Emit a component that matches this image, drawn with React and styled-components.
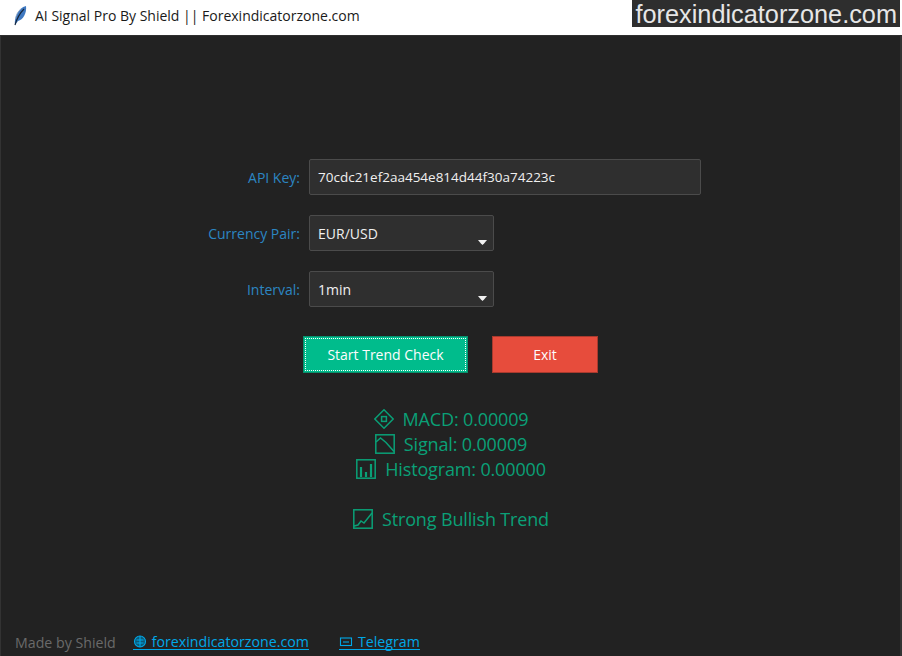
import React from 'react'
import styled, { createGlobalStyle } from 'styled-components'

const Global = createGlobalStyle`
html, body { margin: 0; padding: 0; background: #222222; }
body { font-family: "Open Sans", "Noto Sans", sans-serif; overflow: hidden; }
`
const Page = styled.div`
width: 902px;
height: 656px;
position: relative;
display: flex;
flex-direction: column;
overflow: hidden;
`
const TitleBar = styled.div`
height: 35px;
background: #ffffff;
display: flex;
align-items: center;
padding-left: 14px;
gap: 8px;
border-bottom: 1px solid #2f2f2f;
flex-shrink: 0;
`
const TitleText = styled.span`
font-size: 14px;
color: #1a1a1a;
padding-bottom: 4px;
`
const Feather = styled.svg`
width: 13px;
height: 21px;
margin-bottom: 4px;
`
const Watermark = styled.div`
position: absolute;
top: 0;
right: 2px;
width: 268px;
height: 27px;
background: #2e2e2e;
color: #e6e6e6;
font-family: "Liberation Sans", Arial, sans-serif;
font-size: 25.3px;
line-height: 29px;
text-align: right;
padding-right: 3px;
box-sizing: border-box;
white-space: nowrap;
overflow: hidden;
`
const Body = styled.div`
flex: 1;
background: #222222;
border-left: 1px solid #333333;
border-right: 2px solid #333333;
display: flex;
flex-direction: column;
align-items: flex-start;
padding-top: 123px;
`
const Form = styled.div`
display: grid;
grid-template-columns: 299px auto;
column-gap: 9px;
row-gap: 20px;
align-items: center;
`
const Label = styled.label`
font-size: 14px;
color: #2c86c2;
text-align: right;
`
const Field = styled.div`
width: ${props => props.w}px;
height: 36px;
box-sizing: border-box;
background: #2f2f2f;
border: 1px solid #4b4b4b;
border-radius: 2px;
color: #f0f0f0;
font-size: ${props => props.size}px;
display: flex;
align-items: center;
padding-left: 8px;
position: relative;
`
const Arrow = styled.span`
position: absolute;
right: 6px;
bottom: 5px;
width: 9px;
height: 5px;
background: #f0f0f0;
clip-path: polygon(0 0, 100% 0, 70% 65%, 50% 100%, 30% 65%);
`
const Buttons = styled.div`
display: flex;
margin: 29px 0 0 302px;
gap: 24px;
`
const Button = styled.div`
width: ${props => props.w}px;
height: 37px;
box-sizing: border-box;
background: ${props => props.bg};
border: 1px solid ${props => props.edge};
color: #fdfdfd;
font-size: 14px;
display: flex;
align-items: center;
justify-content: center;
position: relative;
`
const FocusRing = styled.span`
position: absolute;
inset: 1px;
border: 1px dotted #ffffff;
`
const Status = styled.div`
width: 100%;
box-sizing: border-box;
margin-top: 33px;
padding-left: 1px;
display: flex;
flex-direction: column;
align-items: center;
color: #0aa077;
font-size: 18px;
letter-spacing: -0.15px;
`
const StatusRow = styled.div`
height: 25px;
display: flex;
align-items: center;
gap: 9px;
margin-top: ${props => props.gap || 0}px;
`
const Icon = styled.svg`
width: 20px;
height: 20px;
fill: none;
stroke: #0aa077;
stroke-width: 1.5;
flex-shrink: 0;
`
const Footer = styled.div`
margin-top: auto;
height: 28px;
display: flex;
align-items: center;
padding-left: 14px;
font-size: 14.2px;
`
const Made = styled.span`
color: #6a6a6a;
margin-right: 17px;
`
const FootLink = styled.a`
color: #00a8e8;
border-bottom: 1px solid #00a8e8;
height: 15px;
line-height: 15px;
margin-right: 30px;
display: flex;
align-items: center;
gap: 5px;
cursor: pointer;
`
const Small = styled.svg`
width: 14px;
height: 14px;
fill: none;
stroke: #00a8e8;
stroke-width: 1.1;
`

const Macd = () => (
  <Icon viewBox="0 0 20 20">
    <path d="M10 .8 19.2 10 10 19.2 .8 10Z" />
    <rect x="7.6" y="7.6" width="4.8" height="4.8" />
  </Icon>
)
const Signal = () => (
  <Icon viewBox="0 0 20 20">
    <rect x=".8" y=".8" width="18.4" height="18.4" />
    <path d="M1 8 5.5 4 11 8.5 19 17.5" />
  </Icon>
)
const Histogram = () => (
  <Icon viewBox="0 0 20 20">
    <rect x=".8" y=".8" width="18.4" height="18.4" />
    <path strokeWidth="2.2" d="M5 18V8M10 18v-5M15 18V5" />
  </Icon>
)
const Trend = () => (
  <Icon viewBox="0 0 20 20">
    <rect x=".8" y=".8" width="18.4" height="18.4" />
    <path d="M1 17l4-1 3-4 3 2 8-10" />
  </Icon>
)

const App = () => {
  return (
    <Page>
      <Global />
      <TitleBar>
        <Feather viewBox="0 0 13 21">
          <path d="M1 20 C0 13 4 3 12 1 C13 8 9 15 4 16 Z" fill="#3f78c0" />
          <path d="M1 20 C3 13 6 8 10 4" stroke="#16263a" strokeWidth="1.1" fill="none" />
          <path d="M1.5 14 C2 10 4 6 7 4" stroke="#8fa7c2" strokeWidth="0.8" fill="none" />
        </Feather>
        <TitleText>AI Signal Pro By Shield || Forexindicatorzone.com</TitleText>
      </TitleBar>
      <Watermark>forexindicatorzone.com</Watermark>
      <Body>
        <Form>
          <Label>API Key:</Label>
          <Field w={392} size={13.5}>70cdc21ef2aa454e814d44f30a74223c</Field>
          <Label>Currency Pair:</Label>
          <Field w={185} size={14}>EUR/USD<Arrow /></Field>
          <Label>Interval:</Label>
          <Field w={185} size={14}>1min<Arrow /></Field>
        </Form>
        <Buttons>
          <Button w={165} bg="#00bc8c" edge="#0a8f6d">Start Trend Check<FocusRing /></Button>
          <Button w={106} bg="#e74c3c" edge="#a83a2e">Exit</Button>
        </Buttons>
        <Status>
          <StatusRow><Macd />MACD: 0.00009</StatusRow>
          <StatusRow><Signal />Signal: 0.00009</StatusRow>
          <StatusRow><Histogram />Histogram: 0.00000</StatusRow>
          <StatusRow gap={25}><Trend />Strong Bullish Trend</StatusRow>
        </Status>
        <Footer>
          <Made>Made by Shield</Made>
          <FootLink>
            <Small viewBox="0 0 14 14">
              <circle cx="7" cy="6.5" r="5.5" fill="#0b5a78" />
              <path d="M3.5 5h7M3.5 8h7M7 1v11" />
            </Small>
            forexindicatorzone.com
          </FootLink>
          <FootLink>
            <Small viewBox="0 0 14 14">
              <rect x="1.5" y="3" width="11" height="7.5" />
              <path d="M4 7h6" />
            </Small>
            Telegram
          </FootLink>
        </Footer>
      </Body>
    </Page>
  )
}

export default App
